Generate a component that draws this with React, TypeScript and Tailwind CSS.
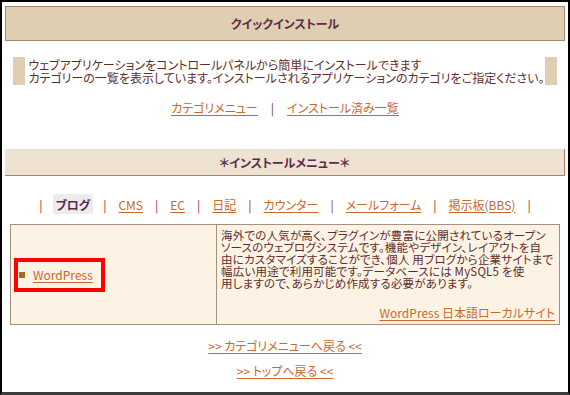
const tabs = ["ブログ", "CMS", "EC", "日記", "カウンター", "メールフォーム", "掲示板(BBS)"];

function Sep() {
  return <span className="text-[#7a3a3a]">|</span>;
}

function Link({ children, className = "" }: { children: React.ReactNode; className?: string }) {
  return (
    <a href="#" className={"text-[#c8682e] underline underline-offset-2 " + className}>
      {children}
    </a>
  );
}

export default function App() {
  return (
    <div className="h-[395px] w-[570px] overflow-hidden bg-white font-['Noto_Sans_CJK_JP','Noto_Sans',sans-serif] text-[12px] leading-[13px] text-[#5e2c2c] [font-feature-settings:'palt']">
      <div className="flex h-[395px] flex-col border-x-2 border-t-2 border-b-[3px] border-x-black border-t-black border-b-[#3c3c3c]">
        <div className="mx-[3px] mt-1 flex h-[35px] items-center justify-center border border-[#a88868] bg-[#e0ceb2] font-bold text-[#5b2c4a]">
          クイックインストール
        </div>

        <div className="mt-4 flex h-[28px] items-stretch px-[11px]">
          <div className="w-[14px] bg-[#e0ceb2]" />
          <div className="flex-1 whitespace-nowrap pl-[3px] pt-[1px]">
            ウェブアプリケーションをコントロールパネルから簡単にインストールできます
            <br />
            カテゴリーの一覧を表示しています。インストールされるアプリケーションのカテゴリをご指定ください。
          </div>
          <div className="w-[14px] bg-[#e0ceb2]" />
        </div>

        <div className="mt-[16px] flex items-center justify-center gap-[13px]">
          <Link>カテゴリメニュー</Link>
          <Sep />
          <Link>インストール済み一覧</Link>
        </div>

        <div className="mx-[3px] mt-[35px] flex h-[27px] items-center justify-center border-r border-b border-[#b08060] bg-[#eee2d2] font-bold text-[#5b2c4a]">
          ＊インストールメニュー＊
        </div>

        <div className="mt-[18px] flex items-center justify-center gap-[12px]">
          <Sep />
          {tabs.map((t, i) => (
            <span key={t} className="flex items-center gap-[12px]">
              {i === 0 ? (
                <span className="-mx-[2px] flex h-[20px] items-center bg-[#ececec] px-[3px] font-bold text-[#5b2c4a]">
                  {t}
                </span>
              ) : (
                <Link>{t}</Link>
              )}
              <Sep />
            </span>
          ))}
        </div>

        <div className="mx-[8px] mt-[10px] flex h-[101px] border border-[#a89080] bg-[#fdf3e5]">
          <div className="flex w-[206px] items-center border-r border-[#a89080] pl-[3px]">
            <div className="flex h-[34px] w-[91px] shrink-0 items-center gap-[8px] border-4 border-[#ff0000] pl-[1px]">
              <span className="h-[6px] w-[6px] bg-[#a86a20]" />
              <Link>WordPress</Link>
            </div>
          </div>
          <div className="flex flex-1 flex-col px-[4px] pt-[4px]">
            <div className="whitespace-nowrap text-[11.5px] leading-[12px] tracking-[0.2px]">
              海外での人気が高く、プラグインが豊富に公開されているオープン
              <br />
              ソースのウェブログシステムです。機能やデザイン、レイアウトを自
              <br />
              由にカスタマイズすることができ、個人 用ブログから企業サイトまで
              <br />
              幅広い用途で利用可能です。データベースには MySQL5 を使
              <br />
              用しますので、あらかじめ作成する必要があります。
            </div>
            <div className="mt-auto mb-[5px] text-right">
              <Link>WordPress 日本語ローカルサイト</Link>
            </div>
          </div>
        </div>

        <div className="mt-[14px] flex flex-col items-center gap-[12px]">
          <Link>{">> カテゴリメニューへ戻る <<"}</Link>
          <Link>{">> トップへ戻る <<"}</Link>
        </div>
      </div>
    </div>
  );
}
